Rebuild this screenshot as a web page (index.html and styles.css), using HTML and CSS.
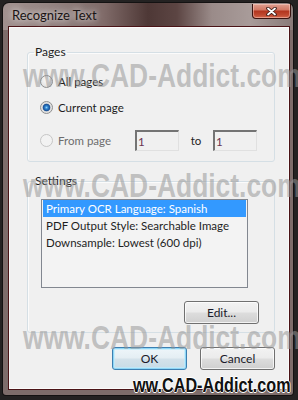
FILE: index.html
```html
<!DOCTYPE html>
<html>
<head>
	<meta charset="UTF-8">
	<title>Recognize Text</title>
	<link rel="stylesheet" href="styles.css">
</head>

<body>
<div class="window">
	<div class="titlebar">
		<span class="title">Recognize Text</span>
		<button class="close" title="Close">
			<svg width="11" height="9" viewBox="0 0 11 9">
				<path d="M2 1.5 L9 7.5 M9 1.5 L2 7.5" stroke="#3b1a14" stroke-width="3.6" stroke-linecap="round"/>
				<path d="M2 1.5 L9 7.5 M9 1.5 L2 7.5" stroke="#ffffff" stroke-width="1.8" stroke-linecap="round"/>
			</svg>
		</button>
	</div>

	<div class="client">
		<fieldset class="group pages">
			<legend>Pages</legend>
			<label class="option"><input type="radio" name="pages"> All pages</label>
			<label class="option current"><input type="radio" name="pages" checked> Current page</label>
			<div class="option range">
				<input type="radio" name="pages" disabled>
				<span class="range-label">From page</span>
				<input type="text" class="page-box" value="1" disabled>
				<span class="to">to</span>
				<input type="text" class="page-box" value="1" disabled>
			</div>
		</fieldset>

		<fieldset class="group settings">
			<legend>Settings</legend>
			<ul class="listbox">
				<li class="selected">Primary OCR Language: Spanish</li>
				<li>PDF Output Style: Searchable Image</li>
				<li>Downsample: Lowest (600 dpi)</li>
			</ul>
			<div class="edit-row">
				<button class="btn">Edit...</button>
			</div>
		</fieldset>

		<div class="actions">
			<button class="btn default">OK</button>
			<button class="btn">Cancel</button>
		</div>
	</div>

	<!-- watermark of the site the screenshot came from -->
	<div class="watermark wm1">www.CAD-Addict.com</div>
	<div class="watermark wm2">www.CAD-Addict.com</div>
	<div class="watermark wm3">www.CAD-Addict.com</div>
	<div class="stamp">ww.CAD-Addict.com</div>
</div>
</body>
</html>
```

FILE: styles.css
```css
body {
	margin: 0;
	width: 298px;
	height: 400px;
	overflow: hidden;
	background: #242222;
	font-family: Lato, "Noto Sans", sans-serif;
	font-size: 11.5px;
	color: #1e1e1e;
}

.window {
	position: relative;
	margin: 3px 0 0 3px;
	width: 290px;
	height: 392px;
	box-sizing: border-box;
	border-radius: 6px 6px 3px 3px;
	background:
		linear-gradient(90deg, #a1918f 0%, #958583 15%, #7f6a68 35%, #4e3836 50%, #5c4543 60%, #9a8b89 72%, #a89b99 85%, #8a7b79 100%) top / 100% 27px no-repeat,
		#7e6d6b;
	box-shadow: 0 0 0 1px #141212;
}

.titlebar {
	display: flex;
	height: 24px;
	padding-left: 9px;
}
.title {
	line-height: 24px;
	font-size: 13px;
	color: #1a1414;
	text-shadow: 0 0 6px rgba(255, 255, 255, 0.8), 0 0 10px rgba(255, 255, 255, 0.5);
}
.close {
	display: flex;
	align-items: center;
	justify-content: center;
	margin: 1px 2px 0 auto;
	padding: 0;
	width: 39px;
	height: 15px;
	border: 1px solid #3a1410;
	border-top: none;
	border-radius: 0 0 4px 4px;
	background: linear-gradient(#e0a091 0%, #d27a66 40%, #b3361f 52%, #c04a31 80%, #d46a4e 100%);
	box-shadow: inset 0 0 0 1px rgba(255, 220, 210, 0.45);
}

.client {
	margin: 0 4px 0 6px;
	height: 362px;
	box-sizing: border-box;
	border: 1px solid #fafafa;
	box-shadow: 0 0 0 1px #4a1316;
	background: #f0f0f0;
	padding: 16px 0 0 17px;
}

.group {
	margin: 0;
	width: 248px;
	box-sizing: border-box;
	border: 1px solid #d5dfe5;
	border-radius: 3px;
	box-shadow: inset 1px 1px 0 #fbfbfb;
	min-width: 0;
}
.group legend {
	padding: 0 1px;
	line-height: 16px;
	font-size: 12px;
	color: #1e1e1e;
}

.pages {
	padding: 12px 0 10px 12px;
}
.pages legend {
	margin-left: -6px;
}

.option {
	display: flex;
	align-items: center;
	gap: 5px;
	height: 18px;
	color: #1e1e1e;
}
.current {
	margin-top: 8px;
}
.range {
	height: 21px;
	margin-top: 14px;
	gap: 0;
}
.range-label {
	width: 82px;
	padding-left: 5px;
	box-sizing: border-box;
	color: #6d6d6d;
}
.to {
	width: 34px;
	text-align: center;
}

input[type="radio"] {
	appearance: none;
	margin: 0;
	width: 13px;
	height: 13px;
	border-radius: 50%;
	border: 1px solid #8e8f8f;
	background: radial-gradient(circle at 50% 40%, #fbfbfb 0%, #e4e4e4 70%, #d2d2d2 100%);
}
input[type="radio"]:checked {
	background: radial-gradient(circle, #8fd2fa 0, #2b7fcc 1.6px, #1b4f93 3.4px, #dcdcdc 4.2px, #f2f2f2 100%);
}
input[type="radio"]:disabled {
	border-color: #c6c6c6;
	background: #f2f2f2;
}

.page-box {
	width: 44px;
	height: 21px;
	box-sizing: border-box;
	margin: 0;
	padding: 0 1px;
	border-style: solid;
	border-width: 2px 1px 1px 2px;
	border-color: #747474 #e0e0e0 #e0e0e0 #747474;
	background: #f0f0f0;
	font-family: inherit;
	font-size: 11.5px;
	color: #6a3552;
}

.settings {
	margin-top: 11px;
	padding: 10px 0 8px 13px;
}
.settings legend {
	margin-left: -7px;
}

.listbox {
	margin: 0;
	padding: 0;
	list-style: none;
	width: 207px;
	height: 89px;
	box-sizing: border-box;
	border: 1px solid #828790;
	background: #f3f3f3;
}
.listbox li {
	margin: 0 1px;
	padding-left: 3px;
	height: 17px;
	line-height: 17px;
	white-space: nowrap;
}
.listbox li.selected {
	background: #3399ff;
	color: #ffffff;
}

.edit-row {
	display: flex;
	justify-content: flex-end;
	margin-top: 13px;
	padding-right: 15px;
}

.btn {
	width: 75px;
	height: 23px;
	padding: 0;
	border: 1px solid #707070;
	border-radius: 3px;
	background: linear-gradient(#f2f2f2 0%, #ebebeb 48%, #dddddd 52%, #cfcfcf 100%);
	box-shadow: inset 0 0 0 1px rgba(255, 255, 255, 0.75);
	font-family: inherit;
	font-size: 12px;
	color: #1a1a2a;
}
.btn.default {
	border-color: #3c7fb1;
	background: linear-gradient(#eef6fa 0%, #e4eef3 48%, #d4e2ea 52%, #c7dbe6 100%);
	box-shadow: inset 0 0 0 1px #8fd6f6, inset 0 0 0 2px rgba(190, 235, 252, 0.7);
}

.actions {
	display: flex;
	justify-content: flex-end;
	gap: 13px;
	width: 248px;
	margin-top: 14px;
}

.watermark {
	position: absolute;
	left: 20px;
	font-family: "Liberation Sans", sans-serif;
	font-weight: bold;
	font-size: 33px;
	line-height: 33px;
	white-space: nowrap;
	transform: scaleX(0.8);
	transform-origin: left center;
	color: rgba(150, 150, 150, 0.55);
	pointer-events: none;
}
.wm1 { top: 56px; }
.wm2 { top: 166px; }
.wm3 { top: 318px; }

.stamp {
	position: absolute;
	left: 130px;
	top: 371px;
	font-family: "Liberation Sans", sans-serif;
	font-weight: bold;
	font-size: 21px;
	line-height: 21px;
	white-space: nowrap;
	transform: scaleX(0.77);
	transform-origin: left center;
	color: #111111;
	text-shadow: 1px 0 0 #ffffff, -1px 0 0 #ffffff, 0 1px 0 #ffffff, 0 -1px 0 #ffffff;
}
```
